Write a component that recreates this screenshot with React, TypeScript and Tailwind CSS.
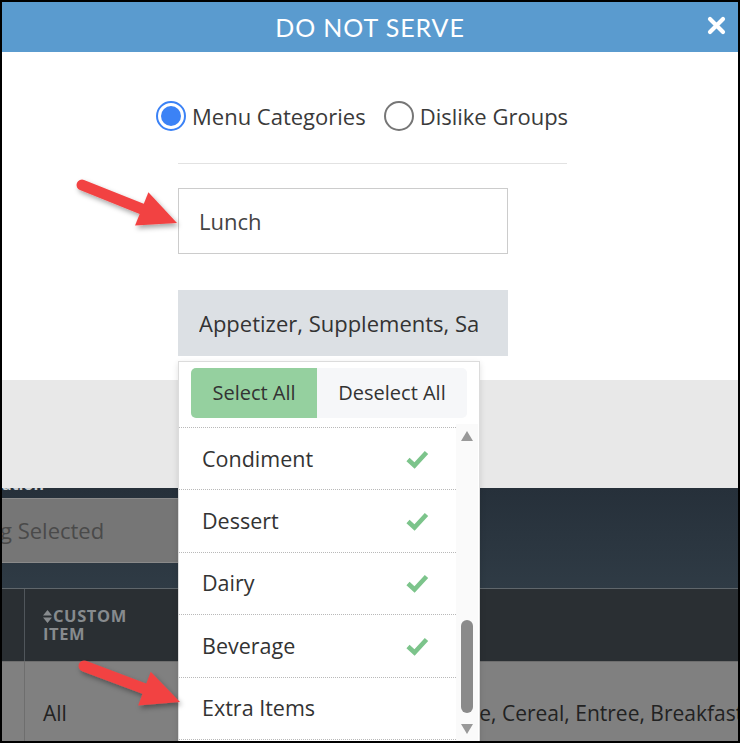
import React from "react";

const OPEN = "font-['Open_Sans',sans-serif]";

const rows = ["Condiment", "Dessert", "Dairy", "Beverage", "Extra Items", "Beverage"];
const checked = [true, true, true, true, false, false];

function Check() {
  return (
    <svg width="24" height="20" viewBox="0 0 24 20">
      <path d="M3 10.5 L9.5 16.5 L21.5 3.5" fill="none" stroke="#7cc48b" strokeWidth="4.6" strokeLinejoin="miter" />
    </svg>
  );
}

function Arrows() {
  // annotation arrows laid over the screenshot
  const arrow = (tx: number, ty: number, hx: number, hy: number) => {
    const dx = hx - tx;
    const dy = hy - ty;
    const len = Math.hypot(dx, dy);
    const ux = dx / len;
    const uy = dy / len;
    const bx = hx - ux * 38;
    const by = hy - uy * 38;
    const px = -uy * 18;
    const py = ux * 18;
    return (
      <g>
        <line x1={tx} y1={ty} x2={bx + ux * 4} y2={by + uy * 4} stroke="#f24343" strokeWidth="11" strokeLinecap="round" />
        <polygon points={`${hx},${hy} ${bx + px},${by + py} ${bx - px},${by - py}`} fill="#f24343" />
      </g>
    );
  };
  return (
    <svg className="pointer-events-none absolute left-[-2px] top-[-2px]" width="740" height="743" viewBox="0 0 740 743">
      <defs>
        <filter id="sh" x="-20%" y="-20%" width="140%" height="140%">
          <feDropShadow dx="2" dy="3" stdDeviation="2.5" floodColor="#000" floodOpacity="0.35" />
        </filter>
      </defs>
      <g filter="url(#sh)">
        {arrow(82, 185, 177, 223)}
        {arrow(84, 666, 180, 702)}
      </g>
    </svg>
  );
}

export default function App() {
  return (
    <div className={`relative flex h-[743px] w-[740px] flex-col overflow-hidden border-2 border-black bg-white ${OPEN}`}>
      {/* header */}
      <div className="relative flex h-[50px] shrink-0 items-center justify-center bg-[#5a9bcf]">
        <span className="pt-[1px] font-['Lato',sans-serif] text-[25px] tracking-[0.9px] text-white">DO NOT SERVE</span>
        <svg className="absolute right-[12px] top-[14px]" width="19" height="19" viewBox="0 0 19 19">
          <path d="M3 3 L16 16 M16 3 L3 16" stroke="#fff" strokeWidth="4.2" strokeLinecap="round" />
        </svg>
      </div>

      {/* body */}
      <div className="flex h-[328px] shrink-0 flex-col pl-[176px] pt-[49px]">
        <div className="-ml-[22px] flex items-center text-[22px] text-[#3a3a3a]">
          <span className="flex h-[30px] w-[30px] items-center justify-center rounded-full border-2 border-[#3b82f6]">
            <span className="h-[20px] w-[20px] rounded-full bg-[#3b82f6]" />
          </span>
          <span className="ml-[6px] leading-[30px]">Menu Categories</span>
          <span className="ml-[18px] h-[30px] w-[30px] rounded-full border-2 border-[#767676]" />
          <span className="ml-[6px] leading-[30px]">Dislike Groups</span>
        </div>
        <div className="mt-[32px] h-px w-[389px] bg-[#e2e2e2]" />
        <div className="mt-[24px] flex h-[66px] w-[330px] items-center border border-[#cccccc] pl-[20px] text-[22px] text-[#444]">
          Lunch
        </div>
        <div className="mt-[36px] flex h-[66px] w-[330px] items-center overflow-hidden bg-[#dce0e4] pl-[21px] pr-[30px] text-[22px] text-[#333]">
          <span className="overflow-hidden whitespace-nowrap">Appetizer, Supplements, Salad, Condiment</span>
        </div>
      </div>

      {/* page behind */}
      <div className="h-[108px] shrink-0 bg-[#e8e8e8]" />
      <div className="h-[100px] shrink-0 overflow-hidden bg-linear-to-b from-[#26303a] to-[#2f3b45]">
        <div className="-mt-[14px] h-[20px] font-bold text-[16px] leading-[20px] text-[#c8ccd0]">ation</div>
        <div className="mt-[4px] flex h-[65px] w-[430px] items-center overflow-hidden border-y border-[#8a8a8a] bg-[#767676] text-[22px] text-[#4a4a4a]">
          <span className="-ml-[2px] whitespace-nowrap">g Selected</span>
        </div>
      </div>
      <div className="h-px shrink-0 bg-[#5f666b]" />
      <div className="flex h-[72px] shrink-0 bg-[#2a2f33]">
        <div className="w-[23px] border-r border-[#50565b]" />
        <div className="flex items-center pl-[18px] font-bold text-[16.5px] leading-[18px] tracking-[0.6px] text-[#878b8e]">
          <div>
            <div className="flex items-center">
              <svg width="9" height="13" viewBox="0 0 9 13" className="mr-[1px]">
                <path d="M4.5 0 L9 5.5 H0 Z M0 7.5 H9 L4.5 13 Z" fill="#878b8e" />
              </svg>
              CUSTOM
            </div>
            <div>ITEM</div>
          </div>
        </div>
      </div>
      <div className="flex h-[80px] shrink-0 border-t border-[#6e6e6e] bg-[#808080] text-[21px] leading-[28px] text-[#222]">
        <div className="w-[23px] border-r border-[#6e6e6e]" />
        <div className="w-[375px] pl-[18px] pt-[37px]">All</div>
        <div className="flex-1 overflow-hidden whitespace-nowrap pt-[37px]">Beverage, Cereal, Entree, Breakfast</div>
      </div>

      {/* open dropdown */}
      <div className="absolute left-[176px] top-[359px] h-[400px] w-[302px] border border-[#dcdcdc] bg-white shadow-[0_2px_6px_rgba(0,0,0,0.12)]">
        <div className="mx-[12px] mt-[6px] flex h-[50px] overflow-hidden rounded-[5px] text-[20px] text-[#333]">
          <div className="flex w-[126px] items-center justify-center bg-[#95d09f]">Select All</div>
          <div className="flex flex-1 items-center justify-center bg-[#f6f7f9]">Deselect All</div>
        </div>
        <div className="mt-[6px] flex">
          <div className="w-[277px] pt-[3px]">
            {rows.map((r, i) => (
              <div
                key={i}
                className="flex h-[62.4px] items-center justify-between border-t border-dotted border-[#b9b9b9] pl-[23px] pr-[27px] text-[21.5px] text-[#333]"
              >
                <span>{r}</span>
                {checked[i] && <Check />}
              </div>
            ))}
          </div>
          <div className="flex h-[320px] w-[22px] flex-col items-center bg-[#fafafa] pt-[7px]">
            <svg width="12" height="10" viewBox="0 0 12 10">
              <path d="M6 0 L12 10 H0 Z" fill="#999" />
            </svg>
            <div className="mt-[179px] h-[93px] w-[12px] rounded-full bg-[#8a8a8a]" />
            <svg width="12" height="10" viewBox="0 0 12 10" className="mt-[11px]">
              <path d="M0 0 H12 L6 10 Z" fill="#999" />
            </svg>
          </div>
        </div>
      </div>

      <Arrows />
    </div>
  );
}
